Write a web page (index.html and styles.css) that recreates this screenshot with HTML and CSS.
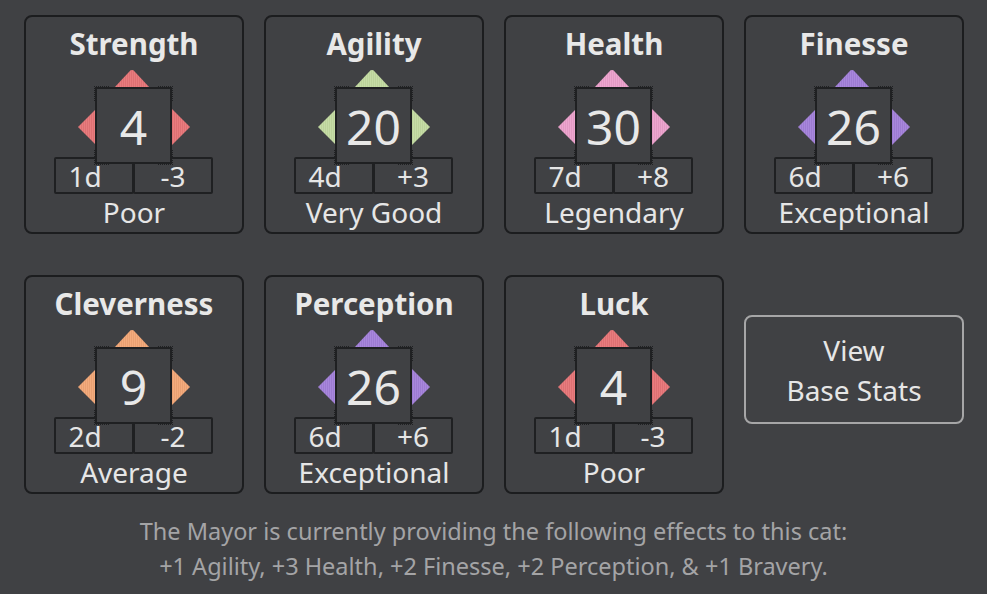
FILE: index.html
```html
<!DOCTYPE html>
<html>
<head>
<meta charset="utf-8">
<link rel="stylesheet" href="styles.css">
</head>
<body>
<div class="panel">
  <div class="grid">
    <div class="card red">
      <div class="title">Strength</div>
      <div class="widget">
        <div class="arrow up"></div><div class="arrow left"></div><div class="arrow right"></div>
        <div class="boxes"><div class="box">1d</div><div class="box">-3</div></div>
        <div class="square">4</div>
      </div>
      <div class="label">Poor</div>
    </div>
    <div class="card green">
      <div class="title">Agility</div>
      <div class="widget">
        <div class="arrow up"></div><div class="arrow left"></div><div class="arrow right"></div>
        <div class="boxes"><div class="box">4d</div><div class="box">+3</div></div>
        <div class="square">20</div>
      </div>
      <div class="label">Very Good</div>
    </div>
    <div class="card pink">
      <div class="title">Health</div>
      <div class="widget">
        <div class="arrow up"></div><div class="arrow left"></div><div class="arrow right"></div>
        <div class="boxes"><div class="box">7d</div><div class="box">+8</div></div>
        <div class="square">30</div>
      </div>
      <div class="label">Legendary</div>
    </div>
    <div class="card purple">
      <div class="title">Finesse</div>
      <div class="widget">
        <div class="arrow up"></div><div class="arrow left"></div><div class="arrow right"></div>
        <div class="boxes"><div class="box">6d</div><div class="box">+6</div></div>
        <div class="square">26</div>
      </div>
      <div class="label">Exceptional</div>
    </div>
    <div class="card orange">
      <div class="title">Cleverness</div>
      <div class="widget">
        <div class="arrow up"></div><div class="arrow left"></div><div class="arrow right"></div>
        <div class="boxes"><div class="box">2d</div><div class="box">-2</div></div>
        <div class="square">9</div>
      </div>
      <div class="label">Average</div>
    </div>
    <div class="card purple">
      <div class="title">Perception</div>
      <div class="widget">
        <div class="arrow up"></div><div class="arrow left"></div><div class="arrow right"></div>
        <div class="boxes"><div class="box">6d</div><div class="box">+6</div></div>
        <div class="square">26</div>
      </div>
      <div class="label">Exceptional</div>
    </div>
    <div class="card red">
      <div class="title">Luck</div>
      <div class="widget">
        <div class="arrow up"></div><div class="arrow left"></div><div class="arrow right"></div>
        <div class="boxes"><div class="box">1d</div><div class="box">-3</div></div>
        <div class="square">4</div>
      </div>
      <div class="label">Poor</div>
    </div>
    <div class="btn-cell">
      <button class="btn">View<br>Base Stats</button>
    </div>
  </div>
  <p class="note">The Mayor is currently providing the following effects to this cat:<br>+1 Agility, +3 Health, +2 Finesse, +2 Perception, &amp; +1 Bravery.</p>
</div>
</body>
</html>
```
FILE: styles.css
```css
html, body {
  margin: 0;
  padding: 0;
  background: #404144;
}
body {
  font-family: "Noto Sans", "Open Sans", sans-serif;
  color: #e6e6e6;
}
.panel {
  padding: 15px 0 0 24px;
  width: 940px;
}
.grid {
  display: grid;
  grid-template-columns: repeat(4, 220px);
  column-gap: 20px;
  row-gap: 41px;
}
.card {
  box-sizing: border-box;
  height: 219px;
  border: 2px solid #1c1d1f;
  border-radius: 8px;
  background: #404144;
  padding-top: 9px;
  display: flex;
  flex-direction: column;
  align-items: center;
}
.title {
  font-weight: 700;
  font-size: 29.5px;
  line-height: 36px;
  color: #e8e8e8;
}
.widget {
  position: relative;
  width: 160px;
  height: 124px;
  margin-top: 8px;
}
.arrow {
  position: absolute;
  background: repeating-linear-gradient(90deg, var(--c1) 0 1px, var(--c2) 1px 2px);
}
.arrow.up {
  left: 60px; top: 0; width: 36px; height: 18px;
  clip-path: polygon(46% 2%, 50% 0, 54% 2%, 100% 100%, 0 100%);
}
.arrow.left {
  left: 24px; top: 38px; width: 19px; height: 38px;
  clip-path: polygon(0 50%, 100% 0, 100% 100%);
}
.arrow.right {
  left: 117px; top: 38px; width: 19px; height: 38px;
  clip-path: polygon(0 0, 100% 50%, 0 100%);
}
.red { --c1: #e87c7e; --c2: #de7073; }
.green { --c1: #c6dca6; --c2: #bcd39b; }
.pink { --c1: #eda6cf; --c2: #e39ac4; }
.purple { --c1: #a887dc; --c2: #9d7bd2; }
.orange { --c1: #f3ab7d; --c2: #e9a072; }
.square {
  position: absolute;
  left: 41px; top: 17px;
  width: 77px; height: 77px;
  box-sizing: border-box;
  border: 2px solid #1f2022;
  background: #404144;
  display: flex;
  align-items: center;
  justify-content: center;
  font-size: 48px;
  line-height: 1;
  color: #e8e8e8;
  padding-top: 3px;
}
.square::before {
  content: "";
  position: absolute;
  inset: -3px;
  border: 1px dotted #1f2022;
  -webkit-mask:
    linear-gradient(#000, #000) top left / 16px 16px no-repeat,
    linear-gradient(#000, #000) top right / 16px 16px no-repeat,
    linear-gradient(#000, #000) bottom left / 16px 16px no-repeat,
    linear-gradient(#000, #000) bottom right / 16px 16px no-repeat;
  mask:
    linear-gradient(#000, #000) top left / 16px 16px no-repeat,
    linear-gradient(#000, #000) top right / 16px 16px no-repeat,
    linear-gradient(#000, #000) bottom left / 16px 16px no-repeat,
    linear-gradient(#000, #000) bottom right / 16px 16px no-repeat;
}
.boxes {
  position: absolute;
  left: 0; top: 87px;
  display: flex;
}
.box {
  box-sizing: border-box;
  width: 80px;
  height: 37px;
  border: 2px solid #1f2022;
  border-radius: 2px;
  font-size: 28px;
  line-height: 34px;
  text-align: center;
  color: #e6e6e6;
}
.box:first-child {
  padding-right: 18px;
}
.box + .box {
  margin-left: -1px;
}
.label {
  font-size: 28px;
  line-height: 30px;
  margin-top: 3px;
  color: #e6e6e6;
}
.btn-cell {
  display: flex;
  align-items: flex-start;
}
.btn {
  box-sizing: border-box;
  width: 220px;
  height: 109px;
  margin-top: 40px;
  border: 2px solid #a6a6a7;
  border-radius: 8px;
  background: #404144;
  color: #e6e6e6;
  font-family: "Noto Sans", "Open Sans", sans-serif;
  font-size: 28px;
  line-height: 40px;
  padding: 0;
}
.note {
  margin: 20px 0 0 -24px;
  width: 987px;
  text-align: center;
  font-size: 23.5px;
  line-height: 35px;
  color: #a4a4a6;
}
```
